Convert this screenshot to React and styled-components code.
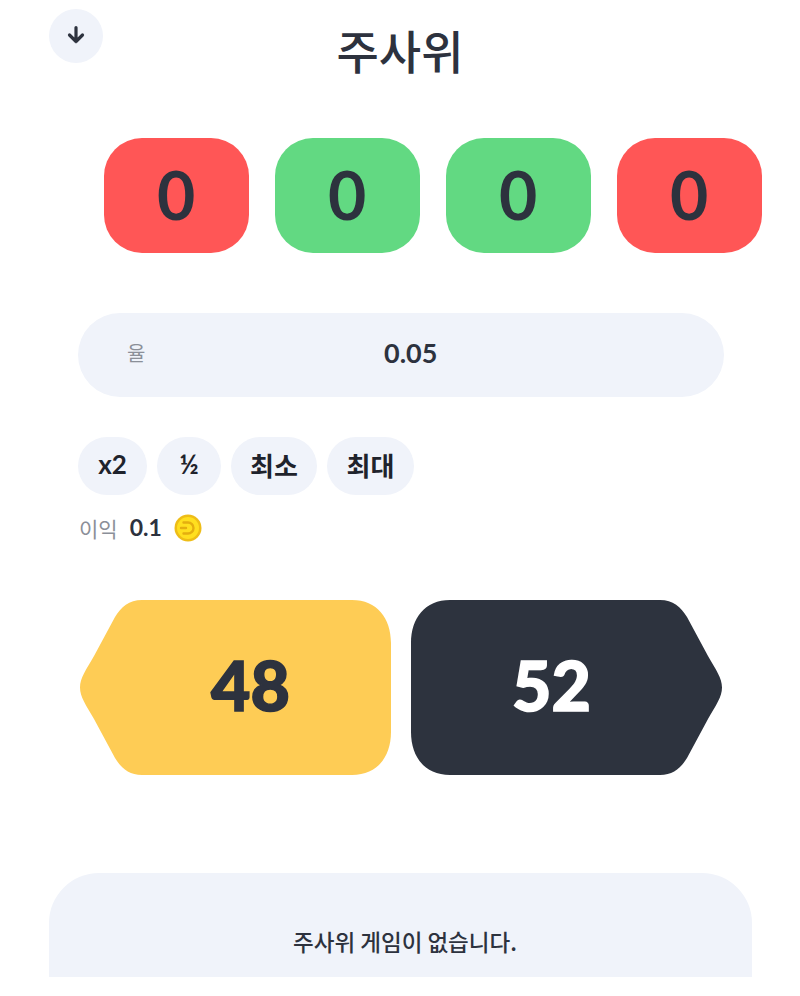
import React from "react";
import styled, { createGlobalStyle } from "styled-components";

const GlobalStyle = createGlobalStyle`
  html, body {
    margin: 0;
    padding: 0;
    background: #fff;
  }
  body {
    font-family: Lato, "Noto Sans CJK KR", sans-serif;
    color: #2d323e;
  }
  * {
    box-sizing: border-box;
  }
`;

const Page = styled.div`
  width: 800px;
  height: 996px;
  padding-top: 9px;
  overflow: hidden;
  display: flex;
  flex-direction: column;
  & > * {
    flex: none;
  }
`;

const Header = styled.header`
  display: grid;
  grid-template-columns: 54px 1fr 54px;
  height: 76px;
  margin: 0 49px 53px;
`;

const BackButton = styled.button`
  width: 54px;
  height: 54px;
  border: 0;
  padding: 0 0 3px;
  border-radius: 50%;
  background: #f0f3fa;
  color: #2d323e;
  display: flex;
  align-items: center;
  justify-content: center;
`;

const Title = styled.h1`
  margin: 0;
  font-family: "Noto Sans CJK KR", sans-serif;
  font-size: 46px;
  line-height: 80px;
  height: 76px;
  font-weight: 500;
  text-align: center;
`;

const DiceRow = styled.div`
  display: flex;
  gap: 26.5px;
  padding-left: 104px;
  margin-bottom: 60px;
`;

const Die = styled.div`
  width: 144.5px;
  height: 115px;
  padding-bottom: 2px;
  border-radius: 38px;
  background: ${(p) => (p.$hit ? "#62d982" : "#ff5656")};
  font-size: 66px;
  font-weight: 700;
  display: flex;
  align-items: center;
  justify-content: center;
`;

const Field = styled.div`
  width: 646px;
  height: 84px;
  margin: 0 0 40px 78px;
  padding: 0 48px 5px 49px;
  border-radius: 42px;
  background: #f0f3fa;
  display: flex;
  align-items: center;
`;

const FieldLabel = styled.span`
  font-family: "Noto Sans CJK KR", sans-serif;
  font-size: 20px;
  color: #8b8f98;
`;

const FieldValue = styled.span`
  flex: 1;
  text-align: center;
  font-size: 27px;
  font-weight: 700;
`;

const Chips = styled.div`
  display: flex;
  gap: 10px;
  margin: 0 0 19px 78px;
`;

const Chip = styled.button`
  width: ${(p) => p.$width}px;
  height: 58px;
  padding: 0 0 4px;
  border: 0;
  border-radius: 29px;
  background: #f0f3fa;
  color: #1f232c;
  font-family: Lato, "Noto Sans CJK KR", sans-serif;
  font-size: 26px;
  font-weight: 700;
`;

const Profit = styled.div`
  display: flex;
  align-items: center;
  height: 28px;
  margin: 0 0 58px 79px;
`;

const ProfitLabel = styled.span`
  font-family: "Noto Sans CJK KR", sans-serif;
  font-size: 21px;
  color: #8b8f98;
  margin-right: 12px;
`;

const ProfitValue = styled.span`
  width: 44px;
  padding-bottom: 2px;
  font-size: 23px;
  font-weight: 700;
`;

const Bets = styled.div`
  display: flex;
  gap: 20px;
  margin: 0 0 98px 80px;
`;

const Bet = styled.button`
  width: 311px;
  height: 175px;
  border: 0;
  padding: ${(p) => (p.$side === "left" ? "0 0 6px 30px" : "0 30px 6px 0")};
  background: ${(p) => (p.$side === "left" ? "#fecc55" : "#2d333e")};
  color: ${(p) => (p.$side === "left" ? "#2d323e" : "#fff")};
  font-family: Lato, sans-serif;
  font-size: 68px;
  font-weight: 900;
  -webkit-text-stroke: 1.5px currentColor;
  clip-path: ${(p) =>
    p.$side === "left"
      ? `path("M62 0H272C297 0 311 18 311 43V132C311 157 297 175 272 175H62C49 175 41 168 35 158L14 119C6 105 0 97 0 87.5C0 78 6 70 14 56L35 17C41 7 49 0 62 0Z")`
      : `path("M39 0H249C262 0 270 7 276 17L297 56C305 70 311 78 311 87.5C311 97 305 105 297 119L276 158C270 168 262 175 249 175H39C14 175 0 157 0 132V43C0 18 14 0 39 0Z")`};
`;

const Panel = styled.section`
  width: 703px;
  height: 104px;
  margin-left: 49px;
  padding: 51px 0 0 9px;
  border-radius: 50px 50px 0 0;
  background: #f0f3fa;
  text-align: center;
  font-family: "Noto Sans CJK KR", sans-serif;
  font-size: 22.5px;
  line-height: 34px;
  font-weight: 500;
`;

function CoinIcon() {
  return (
    <svg width="28" height="28" viewBox="0 0 28 28">
      <circle cx="14" cy="14" r="13.5" fill="#eebd17" />
      <circle cx="14" cy="14" r="11" fill="#ffdf1f" />
      <path
        d="M9.5 8.5h4.5a5.5 5.5 0 0 1 0 11H9.5M7 14h5"
        fill="none"
        stroke="#e4ae10"
        strokeWidth="2.4"
        strokeLinecap="round"
      />
    </svg>
  );
}

function ArrowDownIcon() {
  return (
    <svg width="22" height="22" viewBox="0 0 22 22" fill="none">
      <path
        d="M11 3.5v14M4.5 11l6.5 6.5 6.5-6.5"
        stroke="currentColor"
        strokeWidth="3.2"
        strokeLinecap="round"
        strokeLinejoin="round"
      />
    </svg>
  );
}

const dice = [false, true, true, false];

const chips = [
  { label: "x2", width: 69 },
  { label: "½", width: 64 },
  { label: "최소", width: 86 },
  { label: "최대", width: 87 },
];

export default function App() {
  return (
    <>
      <GlobalStyle />
      <Page>
        <Header>
          <BackButton aria-label="back">
            <ArrowDownIcon />
          </BackButton>
          <Title>주사위</Title>
        </Header>

        <DiceRow>
          {dice.map((hit, i) => (
            <Die key={i} $hit={hit}>
              0
            </Die>
          ))}
        </DiceRow>

        <Field>
          <FieldLabel>율</FieldLabel>
          <FieldValue>0.05</FieldValue>
        </Field>

        <Chips>
          {chips.map((chip) => (
            <Chip key={chip.label} $width={chip.width}>
              {chip.label}
            </Chip>
          ))}
        </Chips>

        <Profit>
          <ProfitLabel>이익</ProfitLabel>
          <ProfitValue>0.1</ProfitValue>
          <CoinIcon />
        </Profit>

        <Bets>
          <Bet $side="left">48</Bet>
          <Bet $side="right">52</Bet>
        </Bets>

        <Panel>주사위 게임이 없습니다.</Panel>
      </Page>
    </>
  );
}
